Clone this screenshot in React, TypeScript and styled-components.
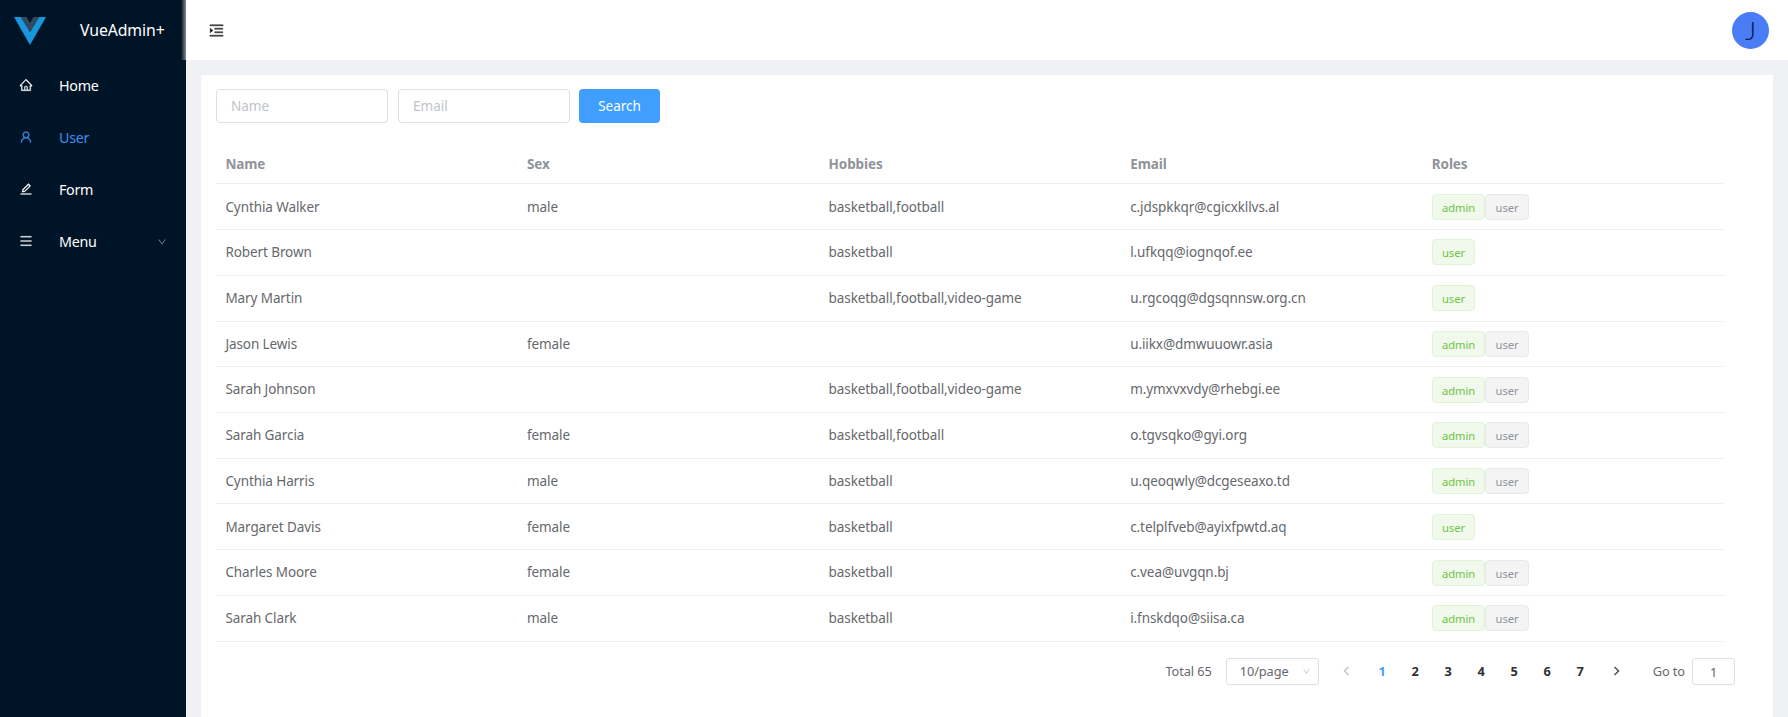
import React from "react";
import styled, { createGlobalStyle } from "styled-components";
import {
  AiOutlineHome,
  AiOutlineUser,
  AiOutlineEdit,
  AiOutlineMenu,
  AiOutlineMenuUnfold,
  AiOutlineDown,
} from "react-icons/ai";

const GlobalStyle = createGlobalStyle`
  * { box-sizing: border-box; }
  body {
    margin: 0;
    overflow: hidden;
    font-family: "Noto Sans", "Open Sans", sans-serif;
    font-size: 13.5px;
    letter-spacing: -0.09px;
    color: #66686c;
  }
`;

const Layout = styled.div`
  display: flex;
  height: 717px;
  background: #eff1f5;
`;

const Sidebar = styled.aside`
  width: 186px;
  flex: none;
  background: #001428;
  color: #fff;
`;

const Brand = styled.div`
  display: flex;
  align-items: center;
  height: 60px;
  padding-left: 14px;
  font-size: 15.8px;
  background: linear-gradient(to left, rgba(255, 255, 255, 0.5), rgba(255, 255, 255, 0)) right / 5px 100% no-repeat;
  & > svg { margin-top: 2px; }
`;

const BrandName = styled.span`
  margin-left: 34px;
  padding-bottom: 1px;
`;

const MenuItem = styled.div<{ $active?: boolean }>`
  display: flex;
  align-items: center;
  height: 52px;
  padding: 0 19px;
  font-size: 14.3px;
  letter-spacing: -0.3px;
  color: ${(p) => (p.$active ? "#3f8df0" : "#fff")};
  svg { flex: none; }
`;

const MenuLabel = styled.span`
  flex: 1;
  margin-left: 26px;
  padding-bottom: 1px;
`;

const MenuIcon = styled.span`
  display: flex;
  padding-bottom: 2px;
  svg {
    stroke: currentColor;
    stroke-width: 16px;
  }
`;

const Main = styled.div`
  flex: 1;
  display: flex;
  flex-direction: column;
`;

const Header = styled.header`
  display: flex;
  align-items: center;
  justify-content: space-between;
  height: 60px;
  flex: none;
  padding: 0 19px 0 22px;
  background: #fff;
  color: #222;
  & > svg {
    stroke: currentColor;
    stroke-width: 24px;
  }
`;

const Avatar = styled.div`
  display: flex;
  align-items: center;
  justify-content: center;
  width: 37px;
  height: 37px;
  border-radius: 50%;
  background: #4a7cf6;
  color: #06153a;
  font: 300 26px/37px Lato, sans-serif;
`;

const Card = styled.main`
  flex: 1;
  margin: 14.500px 15px 0;
  padding: 14.500px 15px 0;
  background: #fff;
`;

const SearchBar = styled.div`
  display: flex;
  gap: 10px;
`;

const TextInput = styled.input`
  width: 172px;
  height: 34px;
  padding: 0 14px;
  border: 1px solid #dcdfe6;
  border-radius: 4px;
  font: inherit;
  outline: none;
  &::placeholder { color: #bfc3cb; }
`;

const SearchButton = styled.button`
  width: 81px;
  height: 34px;
  margin-left: -1px;
  border: 0;
  border-radius: 4px;
  background: #409eff;
  color: #fff;
  font: inherit;
`;

const Table = styled.div`
  width: 1508px;
  margin-top: 20px;
`;

const Row = styled.div<{ $head?: boolean }>`
  display: grid;
  grid-template-columns: repeat(5, 1fr);
  align-items: center;
  height: ${(p) => (p.$head ? 41.4 : 45.73)}px;
  border-bottom: 1px solid #ebeef5;
  font-weight: ${(p) => (p.$head ? 700 : 400)};
  color: ${(p) => (p.$head ? "#909399" : "inherit")};
`;

const Cell = styled.div`
  display: flex;
  padding: 0 0 0.3px 9.4px;
`;

const HeadCell = styled(Cell)`
  padding-top: 1px;
`;

const RolesCell = styled(Cell)`
  padding-bottom: 0;
`;

const Tag = styled.span<{ $primary?: boolean }>`
  height: 26px;
  padding: 0 9.2px;
  line-height: 25px;
  border: 1px solid ${(p) => (p.$primary ? "#e1f3d8" : "#e9e9eb")};
  border-radius: 4px;
  background: ${(p) => (p.$primary ? "#f0f9eb" : "#f4f4f5")};
  color: ${(p) => (p.$primary ? "#6fc445" : "#909399")};
  font-size: 11.2px;
  letter-spacing: -0.05px;
`;

const Pagination = styled.div`
  display: flex;
  align-items: center;
  justify-content: flex-end;
  height: 28px;
  margin-top: 15.500px;
  padding-right: 23px;
  font-size: 12.8px;
`;

const SizeSelect = styled.div`
  display: flex;
  align-items: center;
  justify-content: space-between;
  width: 93px;
  height: 27px;
  margin: 0 9px 0 14px;
  padding: 0 7px 0 13px;
  border: 1px solid #dcdfe6;
  border-radius: 3px;
  svg { color: #c0c4cc; }
`;

const Page = styled.span<{ $active?: boolean }>`
  width: 33px;
  text-align: center;
  font-weight: 700;
  color: ${(p) => (p.$active ? "#409eff" : "#303133")};
`;

const Arrow = styled.span<{ $disabled?: boolean }>`
  display: flex;
  justify-content: center;
  width: ${(p) => (p.$disabled ? 38 : 39)}px;
  color: ${(p) => (p.$disabled ? "#c0c4cc" : "#505255")};
`;

const JumpLabel = styled.span`
  margin-left: 17px;
`;

const JumpInput = styled.div`
  width: 43px;
  height: 27px;
  margin-left: 7px;
  border: 1px solid #dcdfe6;
  border-radius: 3px;
  line-height: 26px;
  text-align: center;
`;

type User = [string, string, string, string, string[]];

const users: User[] = [
  ["Cynthia Walker", "male", "basketball,football", "c.jdspkkqr@cgicxkllvs.al", ["admin", "user"]],
  ["Robert Brown", "", "basketball", "l.ufkqq@iognqof.ee", ["user"]],
  ["Mary Martin", "", "basketball,football,video-game", "u.rgcoqg@dgsqnnsw.org.cn", ["user"]],
  ["Jason Lewis", "female", "", "u.iikx@dmwuuowr.asia", ["admin", "user"]],
  ["Sarah Johnson", "", "basketball,football,video-game", "m.ymxvxvdy@rhebgi.ee", ["admin", "user"]],
  ["Sarah Garcia", "female", "basketball,football", "o.tgvsqko@gyi.org", ["admin", "user"]],
  ["Cynthia Harris", "male", "basketball", "u.qeoqwly@dcgeseaxo.td", ["admin", "user"]],
  ["Margaret Davis", "female", "basketball", "c.telplfveb@ayixfpwtd.aq", ["user"]],
  ["Charles Moore", "female", "basketball", "c.vea@uvgqn.bj", ["admin", "user"]],
  ["Sarah Clark", "male", "basketball", "i.fnskdqo@siisa.ca", ["admin", "user"]],
];

const Logo = () => (
  <svg width="32" height="28" viewBox="0 0 32 28">
    <path d="M0 0H7L16 15L25 0H32L16 28Z" fill="#1798dc" />
    <path d="M7 0H12.5L16 6L19.500 0H25L16 15Z" fill="#35495e" />
  </svg>
);

const Chevron = ({ back }: { back?: boolean }) => (
  <svg width="7" height="10" viewBox="0 0 7 10" fill="none" stroke="currentColor" strokeWidth="1.5">
    <path d={back ? "M5.500 1L1.500 5L5.500 9" : "M1.500 1L5.500 5L1.500 9"} />
  </svg>
);

export default function App() {
  return (
    <Layout>
      <GlobalStyle />
      <Sidebar>
        <Brand>
          <Logo />
          <BrandName>VueAdmin+</BrandName>
        </Brand>
        <MenuItem><MenuIcon><AiOutlineHome size={14} /></MenuIcon><MenuLabel>Home</MenuLabel></MenuItem>
        <MenuItem $active><MenuIcon><AiOutlineUser size={14} /></MenuIcon><MenuLabel>User</MenuLabel></MenuItem>
        <MenuItem><MenuIcon><AiOutlineEdit size={14} /></MenuIcon><MenuLabel>Form</MenuLabel></MenuItem>
        <MenuItem>
          <MenuIcon><AiOutlineMenu size={14} /></MenuIcon>
          <MenuLabel>Menu</MenuLabel>
          <AiOutlineDown size={10} color="#909399" />
        </MenuItem>
      </Sidebar>
      <Main>
        <Header>
          <AiOutlineMenuUnfold size={17} />
          <Avatar>J</Avatar>
        </Header>
        <Card>
          <SearchBar>
            <TextInput placeholder="Name" />
            <TextInput placeholder="Email" />
            <SearchButton>Search</SearchButton>
          </SearchBar>
          <Table>
            <Row $head>
              {["Name", "Sex", "Hobbies", "Email", "Roles"].map((h) => <HeadCell key={h}>{h}</HeadCell>)}
            </Row>
            {users.map(([name, sex, hobbies, email, roles]) => (
              <Row key={email}>
                <Cell>{name}</Cell>
                <Cell>{sex}</Cell>
                <Cell>{hobbies}</Cell>
                <Cell>{email}</Cell>
                <RolesCell>{roles.map((r, i) => <Tag key={r} $primary={i === 0}>{r}</Tag>)}</RolesCell>
              </Row>
            ))}
          </Table>
          <Pagination>
            <span>Total 65</span>
            <SizeSelect>10/page<AiOutlineDown size={9} /></SizeSelect>
            <Arrow $disabled><Chevron back /></Arrow>
            {[1, 2, 3, 4, 5, 6, 7].map((n) => <Page key={n} $active={n === 1}>{n}</Page>)}
            <Arrow><Chevron /></Arrow>
            <JumpLabel>Go to</JumpLabel>
            <JumpInput>1</JumpInput>
          </Pagination>
        </Card>
      </Main>
    </Layout>
  );
}
